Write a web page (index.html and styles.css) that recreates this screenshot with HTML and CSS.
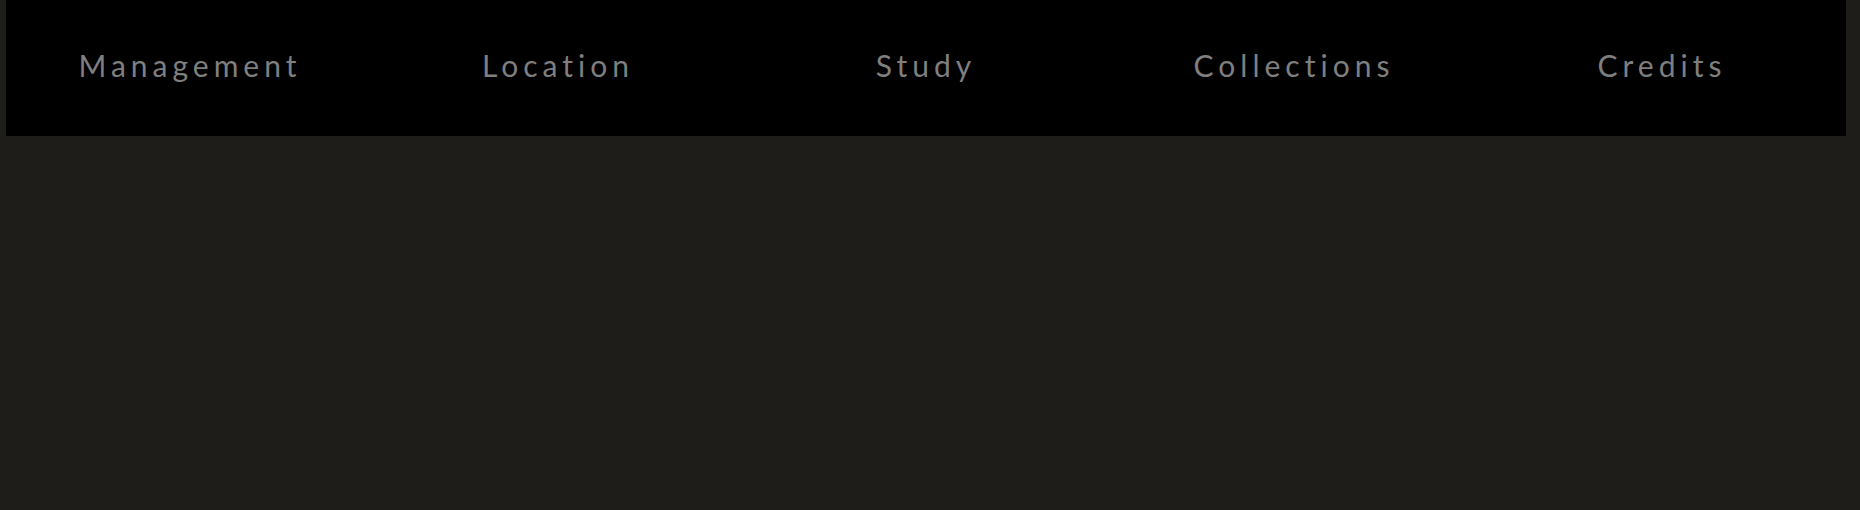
FILE: index.html
```html
<!DOCTYPE html>
<html>
<head>
<meta charset="utf-8">
<link rel="stylesheet" href="styles.css">
</head>
<body>
<nav class="nav">
  <a class="nav-item" href="#">Management</a>
  <a class="nav-item" href="#">Location</a>
  <a class="nav-item" href="#">Study</a>
  <a class="nav-item" href="#">Collections</a>
  <a class="nav-item" href="#">Credits</a>
</nav>
</body>
</html>
```
FILE: styles.css
```css
html, body {
  margin: 0;
  padding: 0;
  background: #1f1d1a;
  height: 100%;
}
body {
  padding-left: 6px;
  font-family: Lato, "Open Sans", sans-serif;
}
.nav {
  width: 1840px;
  height: 136px;
  background: #000;
  display: grid;
  grid-template-columns: repeat(5, 1fr);
  align-items: center;
}
.nav-item {
  text-align: center;
  color: #7f7f7f;
  text-decoration: none;
  font-size: 30px;
  letter-spacing: 5px;
  padding-bottom: 6px;
}
```
